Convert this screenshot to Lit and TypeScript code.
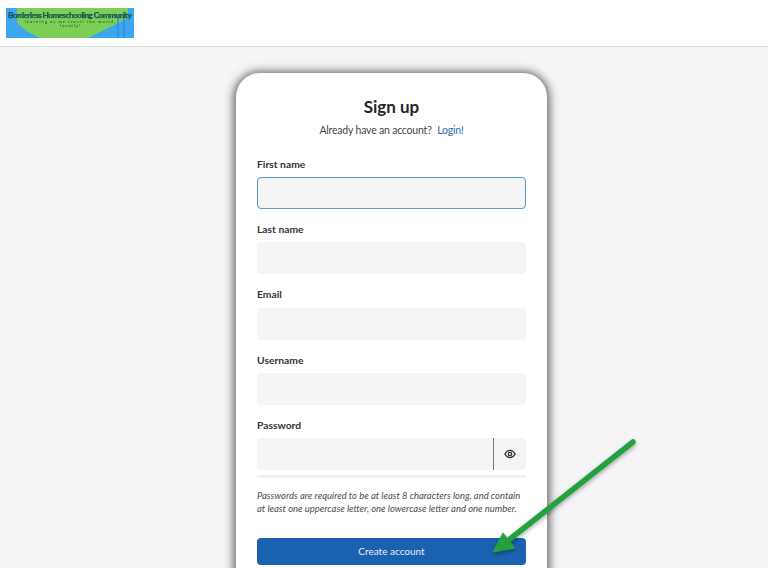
import { LitElement, html, css } from "lit";
import { customElement } from "lit/decorators.js";

@customElement("app-root")
export class AppRoot extends LitElement {
  static styles = css`
    :host { display: block; position: relative; width: 768px; height: 568px; overflow: hidden; background: #f5f5f8; font-family: Lato, "Noto Sans", sans-serif; color: #2b2b2b; }
    .header { box-sizing: border-box; background: #fff; border-bottom: 1px solid #dcdcdf; padding: 8px 6px 0; height: 47px; }
    .logo { display: block; width: 128px; height: 30px; filter: blur(0.35px); }
    .main { display: flex; justify-content: center; padding-top: 26px; padding-left: 15px; }
    .card { width: 311px; box-sizing: border-box; background: #fff; border-radius: 24px; box-shadow: 0 1px 9px 3px rgba(45,45,45,.68); padding: 23px 21px 40px 21px; height: 600px; }
    h1 { margin: 0; font-size: 17px; line-height: 22px; font-weight: 700; text-align: center; color: #262626; }
    .sub { margin: 5px 0 0; font-size: 10.5px; letter-spacing: -0.2px; line-height: 15px; text-align: center; color: #45454a; }
    .sub a { color: #2d6aa8; margin-left: 3px; }
    .form { margin-top: 18px; display: flex; flex-direction: column; gap: 12px; }
    label { display: block; font-size: 10.3px; font-weight: 700; line-height: 16px; margin-bottom: 5.2px; color: #333; }
    .input { height: 32px; box-sizing: border-box; background: #f4f5f7; border-radius: 4px; }
    .focus { border: 1px solid #5a98c8; }
    .pw { display: flex; justify-content: flex-end; }
    .eye { width: 32px; border-left: 1px solid #77777a; display: flex; align-items: center; justify-content: center; }
    .meter { height: 3px; background: #f1f1f3; margin-top: 5px; }
    .hint { margin: 11px 0 0; font-size: 9.45px; line-height: 13.5px; font-style: italic; color: #4a4a4e; white-space: nowrap; }
    button { display: block; width: 100%; height: 27px; margin-top: 22px; border: 0; border-radius: 4px; background: #1a62b0; color: #e8eef6; font: 10px Lato, "Noto Sans", sans-serif; }
    .arrow { position: absolute; left: 0; top: 0; width: 768px; height: 568px; pointer-events: none; }
  `;

  render() {
    const field = (name: string) => html`<div><label>${name}</label><div class="input"></div></div>`;
    return html`
      <div class="header">
        <svg class="logo" viewBox="0 0 128 30" role="img" aria-label="Borderless Homeschooling Community">
          <rect width="128" height="30" fill="#3da6ee" />
          <path d="M11 0H122V10L82 30H34L22 24 11 15Z" fill="#7ccf55" />
          <path d="M112 6V30M118 4V30" stroke="#2f8fd6" stroke-width="1.5" />
          <text x="64" y="9.800" text-anchor="middle" font-size="8.300" font-weight="900" font-family="Lato" fill="#1c5a55" stroke="#1c5a55" stroke-width=".25" textLength="124">Borderless Homeschooling Community</text>
          <text x="64" y="14.500" text-anchor="middle" font-size="4" font-family="Lato" fill="#2d6b45" stroke="#2d6b45" stroke-width=".1" textLength="90">learning as we travel the world,</text>
          <text x="64" y="19.200" text-anchor="middle" font-size="4" font-family="Lato" fill="#2d6b45" stroke="#2d6b45" stroke-width=".1" textLength="20">locally!</text>
        </svg>
      </div>
      <div class="main">
        <div class="card">
          <h1>Sign up</h1>
          <p class="sub">Already have an account? <a>Login!</a></p>
          <div class="form">
            <div><label>First name</label><div class="input focus"></div></div>
            ${field("Last name")}
            ${field("Email")}
            ${field("Username")}
            <div>
              <label>Password</label>
              <div class="input pw">
                <div class="eye">
                  <svg width="12" height="10" viewBox="0 0 12 10" fill="none" stroke="#333" stroke-width="1.3">
                    <path d="M.8 5C2.200 2.600 3.900 1.400 6 1.400S9.800 2.600 11.200 5C9.800 7.400 8.100 8.600 6 8.600S2.200 7.400.8 5Z" />
                    <circle cx="6" cy="5" r="1.700" />
                  </svg>
                </div>
              </div>
              <div class="meter"></div>
              <p class="hint">Passwords are required to be at least 8 characters long, and contain<br />at least one uppercase letter, one lowercase letter and one number.</p>
              <button>Create account</button>
            </div>
          </div>
        </div>
      </div>
      <svg class="arrow" viewBox="0 0 768 568">
        <defs>
          <filter id="s" x="-20%" y="-20%" width="140%" height="140%">
            <feDropShadow dx="0" dy="2" stdDeviation="2" flood-color="#000" flood-opacity=".35" />
          </filter>
        </defs>
        <g filter="url(#s)" fill="#22a13c">
          <path d="M633 442 510 539" stroke="#22a13c" stroke-width="5.500" stroke-linecap="round" />
          <path d="M493 552 503 533 515 548Z" stroke="#22a13c" stroke-width="1" stroke-linejoin="round" />
        </g>
      </svg>
    `;
  }
}
